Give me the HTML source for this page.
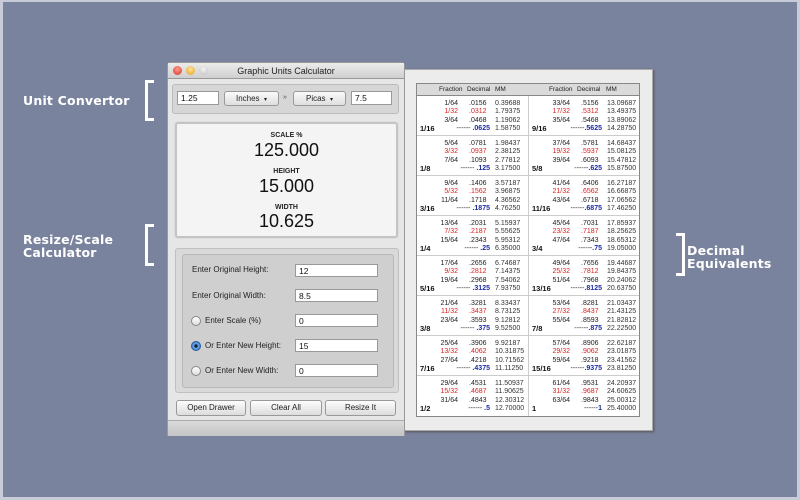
<!DOCTYPE html>
<html><head><style>
*{margin:0;padding:0;box-sizing:border-box}
body{width:800px;height:500px;background:#c8ccd8;position:relative;overflow:hidden;font-family:"Liberation Sans",sans-serif}
.bg{position:absolute;left:3px;top:2px;width:794px;height:495px;background:#7a839d}
.lbl{position:absolute;color:#fff;font-weight:bold;font-size:12.5px;line-height:13px;font-family:"DejaVu Sans",sans-serif;letter-spacing:0.2px}
.br{position:absolute;border:3px solid #fff;width:9px}
.brl{border-right:none}.brr{border-left:none}
.a{position:absolute}
.win{left:167px;top:62px;width:238px;height:374px;background:#e6e6e6;border:1px solid #999;border-radius:4px 4px 0 0}
.title{left:0;top:0;width:236px;height:16px;background:linear-gradient(#ececec,#cfcfcf);border-bottom:1px solid #999;font-size:9px;text-align:center;line-height:16px;color:#222}
.dot{position:absolute;top:3px;width:9px;height:9px;border-radius:50%}
.fld{position:absolute;background:#fff;border:1px solid #999;font-size:8.5px;line-height:12px;padding-left:3px;color:#111}
.pop{position:absolute;background:linear-gradient(#fafafa,#dedede);border:1px solid #999;border-radius:3px;font-size:8px;line-height:13px;text-align:center;color:#222}
.btn{position:absolute;top:400px;height:16px;background:linear-gradient(#fdfdfd,#dcdcdc);border:1px solid #999;border-radius:3px;font-size:8px;line-height:14px;text-align:center;color:#222}
.fl{position:absolute;left:192px;font-size:8px;color:#222}
.rad{position:absolute;left:191px;width:10px;height:10px;border-radius:50%;border:1px solid #888;background:linear-gradient(#fff,#ddd)}
.cap{position:absolute;left:175px;width:223px;text-align:center;font-weight:bold;font-size:7px;color:#222}
.num{position:absolute;left:175px;width:223px;text-align:center;font-size:18px;color:#111}
.drawer{left:404px;top:69px;width:249px;height:362px;background:#ececec;border:1px solid #aaa;box-shadow:1px 1px 2px #555}
.tbl{position:absolute;left:416px;top:83px;width:224px;height:334px;background:#fff;border:1px solid #888}
.hd{position:absolute;left:0;top:0;width:222px;height:12px;background:#dadada;border-bottom:1px solid #888;font-size:6.5px;line-height:12px;color:#222}
.c{position:absolute;width:111px;height:40px;border-bottom:1px solid #ccc;font-size:7px;color:#222}
.c.r{border-left:1px solid #ccc}
.ln{position:absolute;left:0;width:111px;height:8px;line-height:8px}
.ln .f{position:absolute;right:70px;text-align:right}
.ln .d{position:absolute;left:52px}
.ln .m{position:absolute;left:78px;color:#333}
.red{color:#e02020}
.ln .k{position:absolute;left:3px;font-weight:bold;color:#111;font-size:7.5px}
.ln .s{position:absolute;left:39px;width:34px;text-align:right;color:#222}
.b{color:#1a2a9c;font-weight:bold}
</style></head><body>
<div class="bg"></div>
<div class="lbl" style="left:23px;top:94px">Unit Convertor</div>
<div class="br brl" style="left:145px;top:80px;height:41px"></div>
<div class="lbl" style="left:23px;top:233px">Resize/Scale<br>Calculator</div>
<div class="br brl" style="left:145px;top:224px;height:42px"></div>
<div class="br brr" style="left:676px;top:233px;height:43px"></div>
<div class="lbl" style="left:687px;top:244px">Decimal<br>Equivalents</div>

<div class="a drawer"></div>
<div class="tbl">
<div class="hd"><span class="a" style="left:22px">Fraction</span><span class="a" style="left:50px">Decimal</span><span class="a" style="left:78px">MM</span><span class="a" style="left:132px">Fraction</span><span class="a" style="left:160px">Decimal</span><span class="a" style="left:189px">MM</span></div>
<div style="position:absolute;left:0;top:12px">
<div class="c" style="left:0;top:0"><div class="ln" style="top:4px"><span class="f">1/64</span><span class="d">.0156</span><span class="m">0.39688</span></div><div class="ln red" style="top:12px"><span class="f">1/32</span><span class="d">.0312</span><span class="m">1.79375</span></div><div class="ln" style="top:21px"><span class="f">3/64</span><span class="d">.0468</span><span class="m">1.19062</span></div><div class="ln" style="top:29px"><span class="k">1/16</span><span class="s">------ <b class="b">.0625</b></span><span class="m">1.58750</span></div></div>
<div class="c" style="left:0;top:40px"><div class="ln" style="top:4px"><span class="f">5/64</span><span class="d">.0781</span><span class="m">1.98437</span></div><div class="ln red" style="top:12px"><span class="f">3/32</span><span class="d">.0937</span><span class="m">2.38125</span></div><div class="ln" style="top:21px"><span class="f">7/64</span><span class="d">.1093</span><span class="m">2.77812</span></div><div class="ln" style="top:29px"><span class="k">1/8</span><span class="s">------ <b class="b">.125</b></span><span class="m">3.17500</span></div></div>
<div class="c" style="left:0;top:80px"><div class="ln" style="top:4px"><span class="f">9/64</span><span class="d">.1406</span><span class="m">3.57187</span></div><div class="ln red" style="top:12px"><span class="f">5/32</span><span class="d">.1562</span><span class="m">3.96875</span></div><div class="ln" style="top:21px"><span class="f">11/64</span><span class="d">.1718</span><span class="m">4.36562</span></div><div class="ln" style="top:29px"><span class="k">3/16</span><span class="s">------ <b class="b">.1875</b></span><span class="m">4.76250</span></div></div>
<div class="c" style="left:0;top:120px"><div class="ln" style="top:4px"><span class="f">13/64</span><span class="d">.2031</span><span class="m">5.15937</span></div><div class="ln red" style="top:12px"><span class="f">7/32</span><span class="d">.2187</span><span class="m">5.55625</span></div><div class="ln" style="top:21px"><span class="f">15/64</span><span class="d">.2343</span><span class="m">5.95312</span></div><div class="ln" style="top:29px"><span class="k">1/4</span><span class="s">------ <b class="b">.25</b></span><span class="m">6.35000</span></div></div>
<div class="c" style="left:0;top:160px"><div class="ln" style="top:4px"><span class="f">17/64</span><span class="d">.2656</span><span class="m">6.74687</span></div><div class="ln red" style="top:12px"><span class="f">9/32</span><span class="d">.2812</span><span class="m">7.14375</span></div><div class="ln" style="top:21px"><span class="f">19/64</span><span class="d">.2968</span><span class="m">7.54062</span></div><div class="ln" style="top:29px"><span class="k">5/16</span><span class="s">------ <b class="b">.3125</b></span><span class="m">7.93750</span></div></div>
<div class="c" style="left:0;top:200px"><div class="ln" style="top:4px"><span class="f">21/64</span><span class="d">.3281</span><span class="m">8.33437</span></div><div class="ln red" style="top:12px"><span class="f">11/32</span><span class="d">.3437</span><span class="m">8.73125</span></div><div class="ln" style="top:21px"><span class="f">23/64</span><span class="d">.3593</span><span class="m">9.12812</span></div><div class="ln" style="top:29px"><span class="k">3/8</span><span class="s">------ <b class="b">.375</b></span><span class="m">9.52500</span></div></div>
<div class="c" style="left:0;top:240px"><div class="ln" style="top:4px"><span class="f">25/64</span><span class="d">.3906</span><span class="m">9.92187</span></div><div class="ln red" style="top:12px"><span class="f">13/32</span><span class="d">.4062</span><span class="m">10.31875</span></div><div class="ln" style="top:21px"><span class="f">27/64</span><span class="d">.4218</span><span class="m">10.71562</span></div><div class="ln" style="top:29px"><span class="k">7/16</span><span class="s">------ <b class="b">.4375</b></span><span class="m">11.11250</span></div></div>
<div class="c" style="left:0;top:280px;border-bottom:none"><div class="ln" style="top:4px"><span class="f">29/64</span><span class="d">.4531</span><span class="m">11.50937</span></div><div class="ln red" style="top:12px"><span class="f">15/32</span><span class="d">.4687</span><span class="m">11.90625</span></div><div class="ln" style="top:21px"><span class="f">31/64</span><span class="d">.4843</span><span class="m">12.30312</span></div><div class="ln" style="top:29px"><span class="k">1/2</span><span class="s">------ <b class="b">.5</b></span><span class="m">12.70000</span></div></div>
<div class="c r" style="left:111px;top:0"><div class="ln" style="top:4px"><span class="f">33/64</span><span class="d">.5156</span><span class="m">13.09687</span></div><div class="ln red" style="top:12px"><span class="f">17/32</span><span class="d">.5312</span><span class="m">13.49375</span></div><div class="ln" style="top:21px"><span class="f">35/64</span><span class="d">.5468</span><span class="m">13.89062</span></div><div class="ln" style="top:29px"><span class="k">9/16</span><span class="s">------<b class="b">.5625</b></span><span class="m">14.28750</span></div></div>
<div class="c r" style="left:111px;top:40px"><div class="ln" style="top:4px"><span class="f">37/64</span><span class="d">.5781</span><span class="m">14.68437</span></div><div class="ln red" style="top:12px"><span class="f">19/32</span><span class="d">.5937</span><span class="m">15.08125</span></div><div class="ln" style="top:21px"><span class="f">39/64</span><span class="d">.6093</span><span class="m">15.47812</span></div><div class="ln" style="top:29px"><span class="k">5/8</span><span class="s">------<b class="b">.625</b></span><span class="m">15.87500</span></div></div>
<div class="c r" style="left:111px;top:80px"><div class="ln" style="top:4px"><span class="f">41/64</span><span class="d">.6406</span><span class="m">16.27187</span></div><div class="ln red" style="top:12px"><span class="f">21/32</span><span class="d">.6562</span><span class="m">16.66875</span></div><div class="ln" style="top:21px"><span class="f">43/64</span><span class="d">.6718</span><span class="m">17.06562</span></div><div class="ln" style="top:29px"><span class="k">11/16</span><span class="s">------<b class="b">.6875</b></span><span class="m">17.46250</span></div></div>
<div class="c r" style="left:111px;top:120px"><div class="ln" style="top:4px"><span class="f">45/64</span><span class="d">.7031</span><span class="m">17.85937</span></div><div class="ln red" style="top:12px"><span class="f">23/32</span><span class="d">.7187</span><span class="m">18.25625</span></div><div class="ln" style="top:21px"><span class="f">47/64</span><span class="d">.7343</span><span class="m">18.65312</span></div><div class="ln" style="top:29px"><span class="k">3/4</span><span class="s">------<b class="b">.75</b></span><span class="m">19.05000</span></div></div>
<div class="c r" style="left:111px;top:160px"><div class="ln" style="top:4px"><span class="f">49/64</span><span class="d">.7656</span><span class="m">19.44687</span></div><div class="ln red" style="top:12px"><span class="f">25/32</span><span class="d">.7812</span><span class="m">19.84375</span></div><div class="ln" style="top:21px"><span class="f">51/64</span><span class="d">.7968</span><span class="m">20.24062</span></div><div class="ln" style="top:29px"><span class="k">13/16</span><span class="s">------<b class="b">.8125</b></span><span class="m">20.63750</span></div></div>
<div class="c r" style="left:111px;top:200px"><div class="ln" style="top:4px"><span class="f">53/64</span><span class="d">.8281</span><span class="m">21.03437</span></div><div class="ln red" style="top:12px"><span class="f">27/32</span><span class="d">.8437</span><span class="m">21.43125</span></div><div class="ln" style="top:21px"><span class="f">55/64</span><span class="d">.8593</span><span class="m">21.82812</span></div><div class="ln" style="top:29px"><span class="k">7/8</span><span class="s">------<b class="b">.875</b></span><span class="m">22.22500</span></div></div>
<div class="c r" style="left:111px;top:240px"><div class="ln" style="top:4px"><span class="f">57/64</span><span class="d">.8906</span><span class="m">22.62187</span></div><div class="ln red" style="top:12px"><span class="f">29/32</span><span class="d">.9062</span><span class="m">23.01875</span></div><div class="ln" style="top:21px"><span class="f">59/64</span><span class="d">.9218</span><span class="m">23.41562</span></div><div class="ln" style="top:29px"><span class="k">15/16</span><span class="s">------<b class="b">.9375</b></span><span class="m">23.81250</span></div></div>
<div class="c r" style="left:111px;top:280px;border-bottom:none"><div class="ln" style="top:4px"><span class="f">61/64</span><span class="d">.9531</span><span class="m">24.20937</span></div><div class="ln red" style="top:12px"><span class="f">31/32</span><span class="d">.9687</span><span class="m">24.60625</span></div><div class="ln" style="top:21px"><span class="f">63/64</span><span class="d">.9843</span><span class="m">25.00312</span></div><div class="ln" style="top:29px"><span class="k">1</span><span class="s">------<b class="b">1</b></span><span class="m">25.40000</span></div></div>
</div>
</div>

<div class="a win">
<div class="a title">Graphic Units Calculator
<span class="dot" style="left:5px;background:radial-gradient(circle at 50% 35%,#ff9a8a,#d8342a)"></span>
<span class="dot" style="left:18px;background:radial-gradient(circle at 50% 35%,#ffe39a,#e3a11c)"></span>
<span class="dot" style="left:31px;background:radial-gradient(circle at 50% 35%,#f4f4f4,#bdbdbd)"></span>
</div>
<div class="a" style="left:0;top:357px;width:236px;height:16px;background:linear-gradient(#dadada,#c4c4c4);border-top:1px solid #aaa"></div>
</div>
<div class="a" style="left:172px;top:84px;width:227px;height:30px;background:#d6d6d6;border:1px solid #bbb;border-radius:3px"></div>
<div class="fld" style="left:177px;top:91px;width:42px;height:14px">1.25</div>
<div class="pop" style="left:224px;top:91px;width:55px;height:15px">Inches &nbsp;<span style="font-size:6px">▾</span></div>
<div class="a" style="left:283px;top:94px;font-size:7px;color:#555">»</div>
<div class="pop" style="left:293px;top:91px;width:53px;height:15px">Picas &nbsp;<span style="font-size:6px">▾</span></div>
<div class="fld" style="left:351px;top:91px;width:41px;height:14px">7.5</div>

<div class="a" style="left:175px;top:122px;width:223px;height:116px;background:#f4f4f4;border:2px solid #c4c4c4;border-radius:3px;box-shadow:0 0 0 1px #ddd"></div>
<div class="cap" style="top:132px">SCALE %</div>
<div class="num" style="top:140px">125.000</div>
<div class="cap" style="top:168px">HEIGHT</div>
<div class="num" style="top:176px">15.000</div>
<div class="cap" style="top:204px">WIDTH</div>
<div class="num" style="top:211px">10.625</div>

<div class="a" style="left:175px;top:248px;width:224px;height:145px;background:#d9d9d9;border:1px solid #c0c0c0;border-radius:3px"></div>
<div class="a" style="left:182px;top:254px;width:212px;height:134px;background:#cfcfcf;border:1px solid #b8b8b8;border-radius:3px"></div>
<div class="fl" style="top:265px">Enter Original Height:</div>
<div class="fld" style="left:295px;top:264px;width:83px;height:13px">12</div>
<div class="fl" style="top:291px">Enter Original Width:</div>
<div class="fld" style="left:295px;top:289px;width:83px;height:13px">8.5</div>
<div class="rad" style="top:316px"></div><div class="fl" style="left:205px;top:316px">Enter Scale (%)</div>
<div class="fld" style="left:295px;top:314px;width:83px;height:13px">0</div>
<div class="rad" style="top:341px;background:radial-gradient(circle,#123 0 1.5px,#6aa8e8 2px,#2f6fc0);border-color:#2a5a9a"></div><div class="fl" style="left:205px;top:341px">Or Enter New Height:</div>
<div class="fld" style="left:295px;top:339px;width:83px;height:13px">15</div>
<div class="rad" style="top:366px"></div><div class="fl" style="left:205px;top:366px">Or Enter New Width:</div>
<div class="fld" style="left:295px;top:364px;width:83px;height:13px">0</div>

<div class="btn" style="left:176px;width:70px">Open Drawer</div>
<div class="btn" style="left:250px;width:72px">Clear All</div>
<div class="btn" style="left:325px;width:71px">Resize It</div>
</body></html>
